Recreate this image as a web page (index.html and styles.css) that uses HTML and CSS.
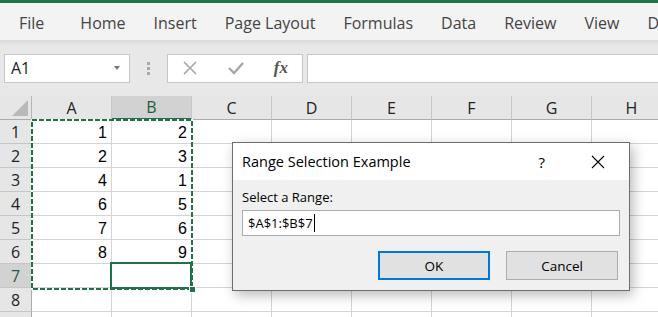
FILE: index.html
```html
<!DOCTYPE html>
<html lang="en">
<head>
  <meta charset="UTF-8">
  <title>Range Selection Example</title>
  <link rel="stylesheet" href="styles.css">
</head>
<body>
  <div class="app">
    <div class="topline"></div>

    <!-- ribbon tabs -->
    <nav class="menu">
      <span class="tab tab-file">File</span>
      <span class="tab">Home</span>
      <span class="tab">Insert</span>
      <span class="tab">Page Layout</span>
      <span class="tab">Formulas</span>
      <span class="tab">Data</span>
      <span class="tab">Review</span>
      <span class="tab">View</span>
      <span class="tab">D</span>
    </nav>

    <!-- formula bar -->
    <div class="formula-bar">
      <div class="name-box">
        <span>A1</span>
        <span class="drop"></span>
      </div>
      <div class="grip"><i></i><i></i><i></i></div>
      <div class="fx-buttons">
        <svg width="16" height="16" viewBox="0 0 16 16"><path d="M2 2 L14 14 M14 2 L2 14" stroke="#a6a6a6" stroke-width="1.6" fill="none"/></svg>
        <svg width="18" height="16" viewBox="0 0 18 16"><path d="M2 8 L7 13 L16 3" stroke="#a6a6a6" stroke-width="2.4" fill="none"/></svg>
        <span class="fx">fx</span>
      </div>
      <div class="formula-input"></div>
    </div>

    <!-- worksheet -->
    <div class="sheet">
      <div class="grid">
        <div class="corner"><span class="tri"></span></div>
        <div class="col-head">A</div>
        <div class="col-head sel">B</div>
        <div class="col-head">C</div>
        <div class="col-head">D</div>
        <div class="col-head">E</div>
        <div class="col-head">F</div>
        <div class="col-head">G</div>
        <div class="col-head">H</div>

        <div class="row-head">1</div><div class="cell">1</div><div class="cell">2</div><div class="cell"></div><div class="cell"></div><div class="cell"></div><div class="cell"></div><div class="cell"></div><div class="cell"></div>
        <div class="row-head">2</div><div class="cell">2</div><div class="cell">3</div><div class="cell"></div><div class="cell"></div><div class="cell"></div><div class="cell"></div><div class="cell"></div><div class="cell"></div>
        <div class="row-head">3</div><div class="cell">4</div><div class="cell">1</div><div class="cell"></div><div class="cell"></div><div class="cell"></div><div class="cell"></div><div class="cell"></div><div class="cell"></div>
        <div class="row-head">4</div><div class="cell">6</div><div class="cell">5</div><div class="cell"></div><div class="cell"></div><div class="cell"></div><div class="cell"></div><div class="cell"></div><div class="cell"></div>
        <div class="row-head">5</div><div class="cell">7</div><div class="cell">6</div><div class="cell"></div><div class="cell"></div><div class="cell"></div><div class="cell"></div><div class="cell"></div><div class="cell"></div>
        <div class="row-head">6</div><div class="cell">8</div><div class="cell">9</div><div class="cell"></div><div class="cell"></div><div class="cell"></div><div class="cell"></div><div class="cell"></div><div class="cell"></div>
        <div class="row-head sel">7</div><div class="cell"></div><div class="cell"></div><div class="cell"></div><div class="cell"></div><div class="cell"></div><div class="cell"></div><div class="cell"></div><div class="cell"></div>
        <div class="row-head">8</div><div class="cell"></div><div class="cell"></div><div class="cell"></div><div class="cell"></div><div class="cell"></div><div class="cell"></div><div class="cell"></div><div class="cell"></div>
        <div class="row-head"></div><div class="cell"></div><div class="cell"></div><div class="cell"></div><div class="cell"></div><div class="cell"></div><div class="cell"></div><div class="cell"></div><div class="cell"></div>
      </div>

      <!-- marching ants around A1:B7 -->
      <svg class="marquee" width="162" height="171" viewBox="0 0 162 171">
        <rect x="1" y="1" width="160" height="169" fill="none" stroke="#fff" stroke-width="2"/>
        <rect x="1" y="1" width="160" height="169" fill="none" stroke="#217346" stroke-width="2" stroke-dasharray="5 2"/>
      </svg>
      <div class="active-cell"></div>
      <div class="fill-handle"></div>
    </div>

    <!-- RefEdit dialog -->
    <div class="dialog">
      <div class="dialog-title">
        <span class="dialog-caption">Range Selection Example</span>
        <span class="dialog-help">?</span>
        <svg class="dialog-close" width="14" height="14" viewBox="0 0 14 14"><path d="M1 1 L13 13 M13 1 L1 13" stroke="#000" stroke-width="1.1" fill="none"/></svg>
      </div>
      <div class="dialog-body">
        <label class="dialog-label" for="range">Select a Range:</label>
        <div class="ref-input" id="range">$A$1:$B$7<span class="text-caret"></span></div>
        <div class="dialog-buttons">
          <button class="btn btn-default">OK</button>
          <button class="btn">Cancel</button>
        </div>
      </div>
    </div>
  </div>
</body>
</html>
```

FILE: styles.css
```css
body {
  margin: 0;
  padding: 0;
  font-family: 'Open Sans', 'Noto Sans', sans-serif;
  color: #222;
  overflow: hidden;
}
.app {
  position: relative;
  width: 658px;
  height: 317px;
  overflow: hidden;
  background-color: #fff;
}
.topline {
  height: 3px;
  background-color: #217346;
}

/* tabs */
.menu {
  display: flex;
  align-items: center;
  gap: 28px;
  height: 37px;
  box-sizing: border-box;
  padding: 2px 0 0 19px;
  background-color: #f3f3f3;
  white-space: nowrap;
}
.tab {
  font-size: 16px;
  color: #444;
}
.tab-file {
  margin-right: 8px;
}

/* formula bar */
.formula-bar {
  display: flex;
  align-items: center;
  height: 56px;
  padding-left: 4px;
  background: linear-gradient(#d9d9d9, #e8e8e8 6px, #e8e8e8);
}
.name-box {
  display: flex;
  align-items: center;
  justify-content: space-between;
  width: 126px;
  height: 29px;
  box-sizing: border-box;
  border: 1px solid #c6c6c6;
  background-color: #fff;
  padding: 0 9px 0 6px;
  font-size: 16px;
  color: #222;
}
.drop {
  width: 0;
  height: 0;
  border-left: 3.5px solid transparent;
  border-right: 3.5px solid transparent;
  border-top: 4px solid #777;
}
.grip {
  display: flex;
  flex-direction: column;
  gap: 2px;
  margin: 0 17px 0 17px;
}
.grip i {
  display: block;
  width: 3px;
  height: 3px;
  background-color: #aaa;
}
.fx-buttons {
  display: flex;
  align-items: center;
  justify-content: space-between;
  width: 136px;
  height: 29px;
  box-sizing: border-box;
  border: 1px solid #c6c6c6;
  background-color: #fff;
  padding: 0 14px 0 14px;
}
.fx {
  font-family: 'Liberation Serif', serif;
  font-style: italic;
  font-weight: bold;
  font-size: 17px;
  color: #555;
}
.formula-input {
  flex: 1;
  height: 29px;
  box-sizing: border-box;
  margin-left: 4px;
  border: 1px solid #c6c6c6;
  border-right: none;
  background-color: #fff;
}

/* sheet */
.sheet {
  position: relative;
}
.grid {
  display: grid;
  grid-template-columns: 32px repeat(8, 80px);
  grid-auto-rows: 24px;
}
.corner, .col-head, .row-head, .cell {
  box-sizing: border-box;
  border-right: 1px solid #d4d4d4;
  border-bottom: 1px solid #d4d4d4;
}
.corner {
  position: relative;
  background-color: #e6e6e6;
  border-right-color: #b5b5b5;
  border-bottom-color: #ababab;
}
.tri {
  position: absolute;
  right: 3px;
  bottom: 3px;
  width: 0;
  height: 0;
  border-left: 16px solid transparent;
  border-bottom: 16px solid #b9b9b9;
}
.col-head {
  display: flex;
  align-items: center;
  justify-content: center;
  background-color: #e6e6e6;
  border-right-color: #c6c6c6;
  border-bottom-color: #ababab;
  font-size: 16px;
  color: #222;
}
.col-head.sel {
  background-color: #d2d2d2;
  border-bottom: 2px solid #217346;
  color: #1e5e3a;
}
.row-head {
  display: flex;
  align-items: center;
  justify-content: center;
  background-color: #e6e6e6;
  border-right-color: #ababab;
  border-bottom-color: #c6c6c6;
  font-size: 16px;
  color: #222;
}
.row-head.sel {
  background-color: #d2d2d2;
  color: #1e5e3a;
}
.cell {
  display: flex;
  align-items: flex-end;
  justify-content: flex-end;
  padding: 0 4px 1px 0;
  font-family: 'Liberation Sans', sans-serif;
  font-size: 16px;
  color: #000;
}
.marquee {
  position: absolute;
  left: 31px;
  top: 23px;
}
.active-cell {
  position: absolute;
  left: 110px;
  top: 166px;
  width: 82px;
  height: 27px;
  box-sizing: border-box;
  border: 2px solid #217346;
}
.fill-handle {
  position: absolute;
  left: 189px;
  top: 190px;
  width: 5px;
  height: 5px;
  background-color: #217346;
  border: 1px solid #fff;
}

/* dialog */
.dialog {
  position: absolute;
  left: 232px;
  top: 142px;
  width: 398px;
  height: 149px;
  box-sizing: border-box;
  border: 1px solid #6e6e6e;
  background-color: #f0f0f0;
  box-shadow: 3px 4px 12px rgba(0, 0, 0, 0.28);
  font-family: 'Open Sans', 'Noto Sans', sans-serif;
  color: #000;
}
.dialog-title {
  display: flex;
  align-items: center;
  height: 37px;
  padding-left: 9px;
  background-color: #fff;
}
.dialog-caption {
  flex: 1;
  font-size: 14.5px;
}
.dialog-help {
  font-size: 15px;
  margin-right: 46px;
}
.dialog-close {
  margin-right: 24px;
}
.dialog-body {
  padding: 8px 9px 0 9px;
}
.dialog-label {
  display: block;
  font-size: 13px;
  line-height: 18px;
}
.ref-input {
  display: flex;
  align-items: center;
  height: 26px;
  margin-top: 4px;
  width: 378px;
  box-sizing: border-box;
  padding-left: 5px;
  border: 1px solid #acacac;
  background-color: #fff;
  font-size: 13px;
}
.text-caret {
  display: inline-block;
  width: 1px;
  height: 18px;
  margin-left: 1px;
  background-color: #000;
}
.dialog-buttons {
  display: flex;
  justify-content: flex-end;
  gap: 16px;
  margin-top: 15px;
  padding-right: 2px;
}
.btn {
  width: 112px;
  height: 29px;
  box-sizing: border-box;
  border: 1px solid #adadad;
  background-color: #e1e1e1;
  font-family: 'Open Sans', 'Noto Sans', sans-serif;
  font-size: 13.5px;
  color: #000;
  padding: 0;
}
.btn-default {
  border: 2px solid #0078d7;
}
```
